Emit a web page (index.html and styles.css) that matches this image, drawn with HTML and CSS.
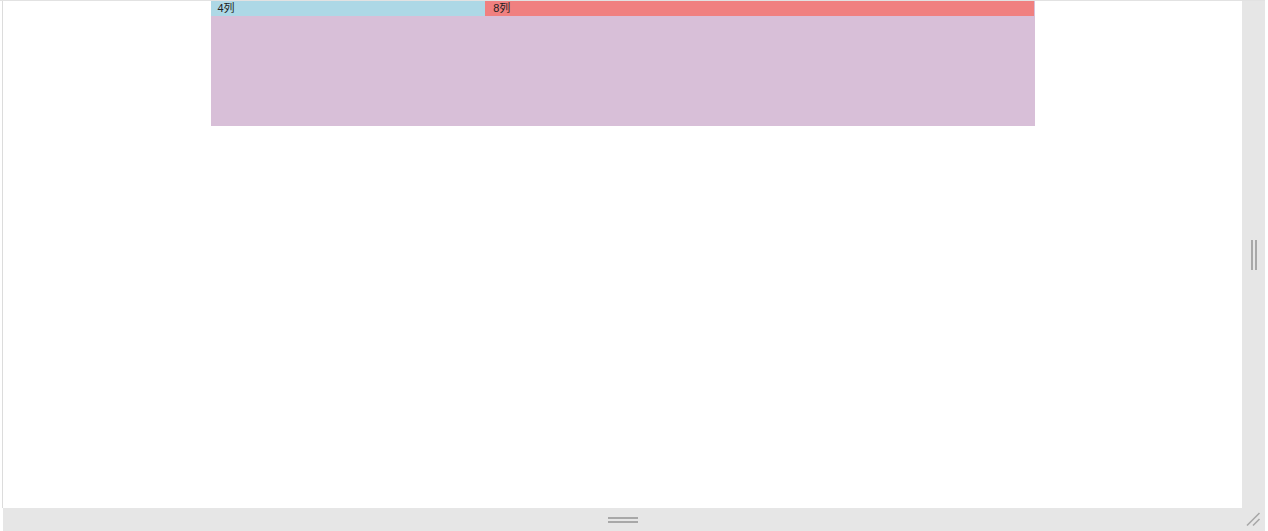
FILE: index.html
```html
<!DOCTYPE html>
<html lang="zh">
<head>
<meta charset="utf-8">
<title>Grid</title>
<link rel="stylesheet" href="styles.css">
</head>
<body>
<div class="window">
  <div class="stage">
    <div class="pane">
      <div class="container">
        <div class="row">
          <div class="col col-4">4列</div>
          <div class="col col-8">8列</div>
        </div>
      </div>
    </div>
    <div class="vbar"><span class="vgrip"></span></div>
  </div>
  <div class="hbar">
    <div class="hgrip-area"><span class="hgrip"></span></div>
    <div class="corner">
      <svg width="23" height="23" viewBox="0 0 23 23"><path d="M5 17.5 L17.5 5 M11 17.5 L17.5 11" stroke="#a9a9a9" stroke-width="1.6" fill="none"/></svg>
    </div>
  </div>
</div>
</body>
</html>
```
FILE: styles.css
```css
html, body {
  margin: 0;
  padding: 0;
  background: #fff;
}
.window {
  width: 1265px;
  height: 531px;
  border-top: 1px solid #e2e2e2;
  box-sizing: border-box;
  display: flex;
  flex-direction: column;
}
.stage {
  display: flex;
  height: 507px;
  padding-left: 2px;
}
.pane {
  flex: 1;
  border-left: 1px solid #dcdcdc;
  background: #fff;
}
.container {
  width: 824px;
  height: 125px;
  margin: 0 auto;
  background: #d8bfd8;
}
.row {
  display: flex;
  height: 15px;
}
.col {
  font-family: "Liberation Sans", "Noto Sans CJK SC", sans-serif;
  font-size: 11px;
  line-height: 15px;
  color: #222;
  padding-left: 7px;
  box-sizing: border-box;
}
.col-4 {
  width: 33.3333%;
  background: #add8e6;
}
.col-8 {
  width: 66.6667%;
  background: #f08080;
  padding-left: 8px;
}
.vbar {
  width: 23px;
  background: #e6e6e6;
  display: flex;
  align-items: center;
  justify-content: center;
}
.vgrip {
  width: 2px;
  height: 30px;
  border-left: 2px solid #a8a8a8;
  border-right: 2px solid #a8a8a8;
}
.hbar {
  display: flex;
  height: 23px;
  margin-left: 3px;
  background: #e6e6e6;
}
.hgrip-area {
  flex: 1;
  display: flex;
  align-items: center;
  justify-content: center;
}
.hgrip {
  width: 30px;
  height: 2px;
  border-top: 2px solid #a8a8a8;
  border-bottom: 2px solid #a8a8a8;
}
.corner {
  width: 23px;
  height: 23px;
}
.corner svg {
  display: block;
}
```
